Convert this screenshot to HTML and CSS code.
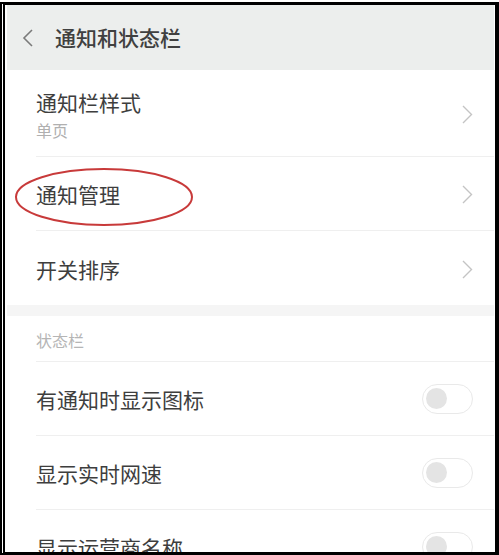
FILE: index.html
```html
<!DOCTYPE html>
<html lang="zh-CN">
<head>
<meta charset="utf-8">
<title>通知和状态栏</title>
<link rel="stylesheet" href="styles.css">
</head>
<body>
<div class="frame">
  <div class="header">
    <svg class="back" width="12" height="18" viewBox="0 0 12 18"><path d="M10 1 L2 9 L10 17" fill="none" stroke="#7a7a7a" stroke-width="1.6"/></svg>
    <span class="title">通知和状态栏</span>
  </div>

  <div class="row row-tall">
    <div class="row-inner">
      <div class="texts">
        <div class="label">通知栏样式</div>
        <div class="sub">单页</div>
      </div>
      <svg class="chev" width="11" height="19" viewBox="0 0 11 19"><path d="M1 1 L9.5 9.5 L1 18" fill="none" stroke="#c4c4c4" stroke-width="1.4"/></svg>
    </div>
  </div>

  <div class="row annotated">
    <div class="row-inner">
      <div class="label">通知管理</div>
      <svg class="chev" width="11" height="19" viewBox="0 0 11 19"><path d="M1 1 L9.5 9.5 L1 18" fill="none" stroke="#c4c4c4" stroke-width="1.4"/></svg>
    </div>
    <svg class="ellipse" width="180" height="60" viewBox="0 0 180 60"><ellipse cx="90" cy="30" rx="88" ry="28" fill="none" stroke="#c83a3a" stroke-width="2"/></svg>
  </div>

  <div class="row">
    <div class="row-inner last">
      <div class="label">开关排序</div>
      <svg class="chev" width="11" height="19" viewBox="0 0 11 19"><path d="M1 1 L9.5 9.5 L1 18" fill="none" stroke="#c4c4c4" stroke-width="1.4"/></svg>
    </div>
  </div>

  <div class="band"></div>

  <div class="section">
    <div class="section-inner">状态栏</div>
  </div>

  <div class="row">
    <div class="row-inner">
      <div class="label">有通知时显示图标</div>
      <span class="toggle"><span class="knob"></span></span>
    </div>
  </div>
  <div class="row">
    <div class="row-inner">
      <div class="label">显示实时网速</div>
      <span class="toggle"><span class="knob"></span></span>
    </div>
  </div>
  <div class="row">
    <div class="row-inner">
      <div class="label">显示运营商名称</div>
      <span class="toggle"><span class="knob"></span></span>
    </div>
  </div>
</div>
</body>
</html>
```

FILE: styles.css
```css
html, body {
  margin: 0;
  padding: 0;
  background: #ffffff;
}
body {
  font-family: "Noto Sans CJK SC", "Noto Sans", sans-serif;
  color: #3e3e3e;
}
.frame {
  box-sizing: border-box;
  width: 499px;
  height: 553px;
  margin-top: 2px;
  border-top: 3px solid #000;
  border-bottom: 3px solid #000;
  border-left: 5px double #000;
  border-right: 4px solid #000;
  padding-left: 2px;
  padding-right: 1px;
  overflow: hidden;
  background: #fff;
}
.header {
  height: 65px;
  background: #eceeed;
  display: flex;
  align-items: center;
}
.back {
  margin-left: 15px;
  margin-top: 1px;
  display: block;
}
.title {
  margin-left: 21px;
  font-size: 21px;
  line-height: 21px;
  font-weight: 500;
  color: #404040;
}
.row {
  position: relative;
  padding-left: 29px;
}
.row-inner {
  height: 73px;
  border-bottom: 1px solid #efefef;
  display: flex;
  align-items: center;
  justify-content: space-between;
  padding-right: 21px;
}
.row-inner.last {
  border-bottom: none;
  height: 74px;
}
.row-tall .row-inner {
  height: 86px;
}
.texts {
  display: flex;
  flex-direction: column;
  gap: 9px;
  margin-top: 4px;
}
.label {
  font-size: 21px;
  line-height: 21px;
  margin-top: 2px;
}
.texts .label {
  margin-top: 0;
}
.sub {
  font-size: 16px;
  line-height: 16px;
  color: #b0b0b0;
}
.chev {
  display: block;
  margin-top: 2px;
}
.ellipse {
  position: absolute;
  left: 7px;
  top: 10px;
}
.band {
  height: 11px;
  background: #f5f5f5;
}
.section {
  padding-left: 29px;
}
.section-inner {
  height: 46px;
  border-bottom: 1px solid #efefef;
  box-sizing: border-box;
  font-size: 16px;
  line-height: 16px;
  color: #b5b5b5;
  padding-top: 16px;
}
.toggle {
  box-sizing: border-box;
  width: 51px;
  height: 30px;
  border: 1.5px solid #e9e9e9;
  border-radius: 15px;
  display: flex;
  align-items: center;
  padding-left: 3px;
  background: #fff;
}
.knob {
  width: 21px;
  height: 21px;
  border-radius: 50%;
  background: #e4e4e4;
}
```
